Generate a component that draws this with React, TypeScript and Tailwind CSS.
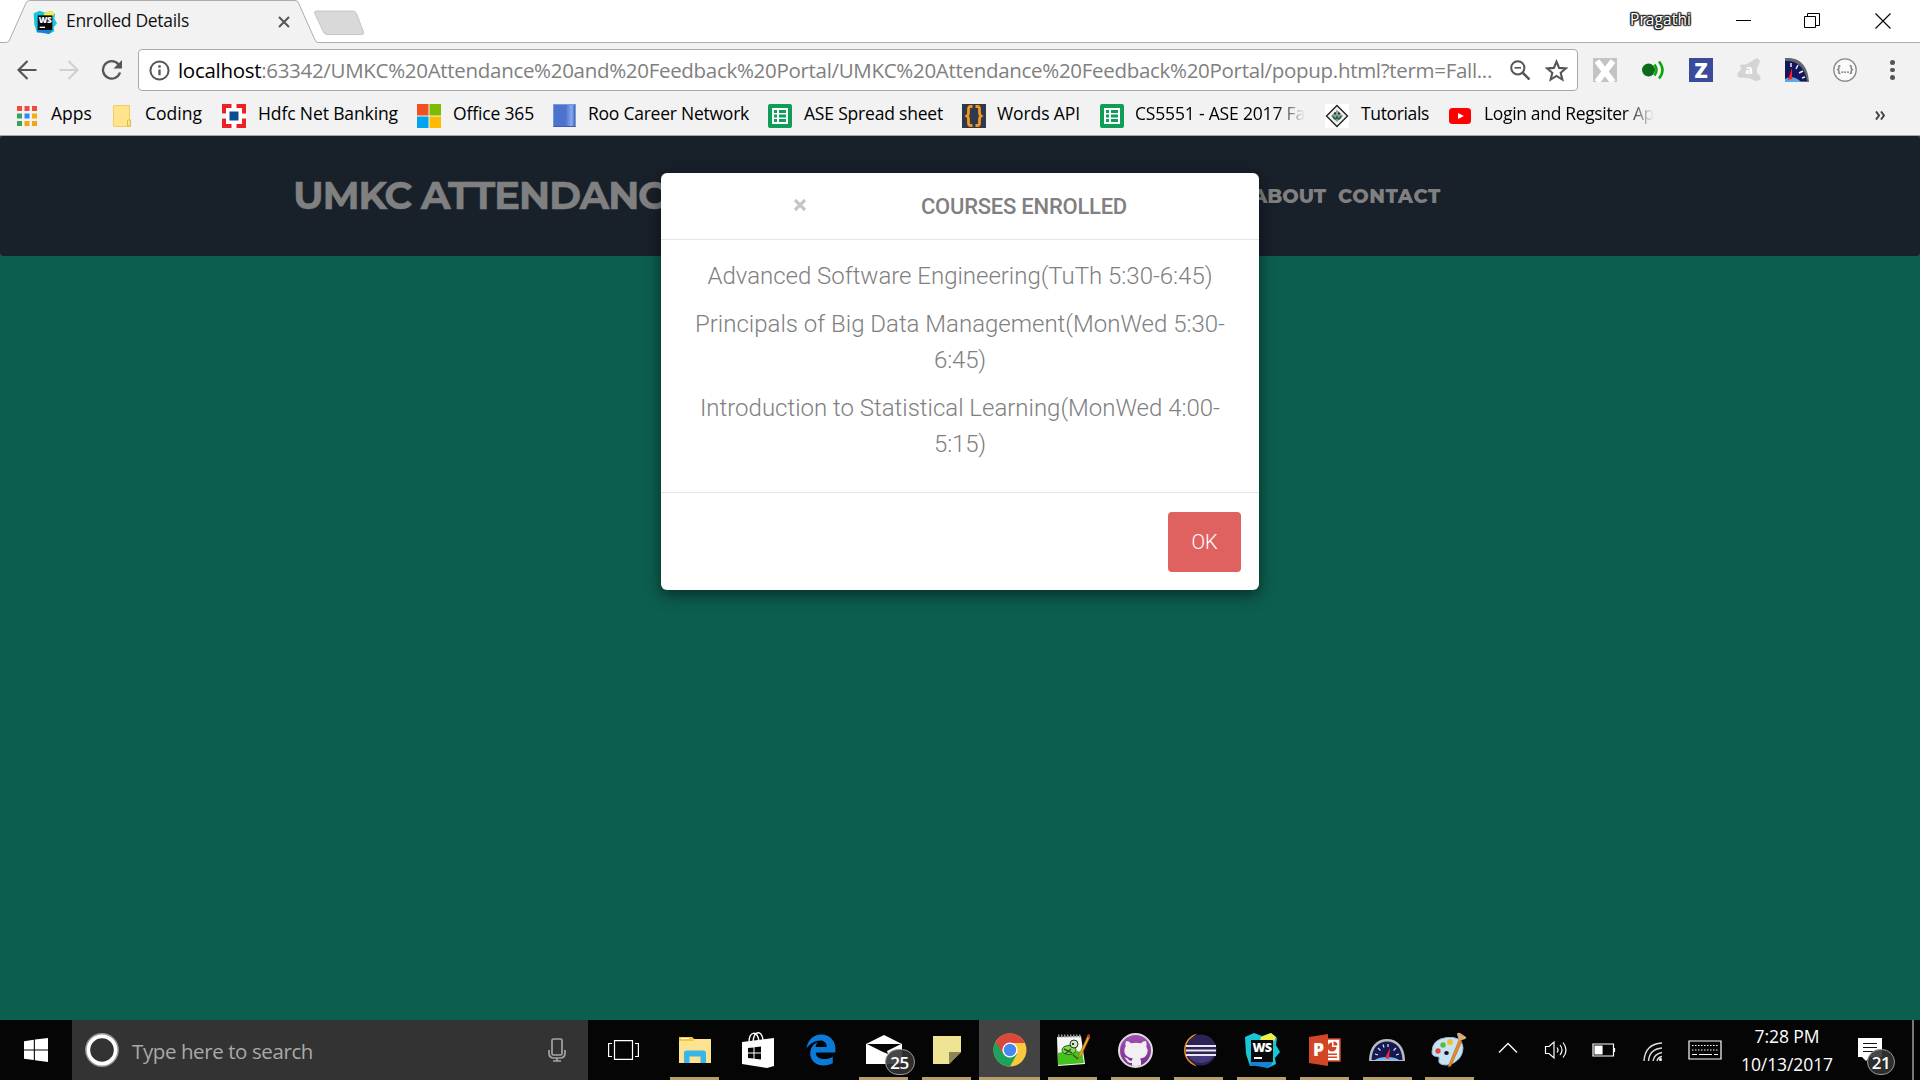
import { useLayoutEffect, useRef, useState, type ReactNode } from "react";
import { FaEdgeLegacy } from "react-icons/fa";

const SEGOE = "font-['Open_Sans','Noto_Sans',sans-serif]";

/** Single line of text whose tracking is tuned so that it spans exactly `width` pixels. */
function Fit({ width, className = "", children }: { width: number; className?: string; children: ReactNode }) {
  const ref = useRef<HTMLSpanElement>(null);
  const [spacing, setSpacing] = useState(0);
  useLayoutEffect(() => {
    const el = ref.current;
    if (!el) return;
    const length = (el.textContent ?? "").length;
    setSpacing((width - el.getBoundingClientRect().width) / length);
  }, [width]);
  return (
    <span ref={ref} className={`inline-block whitespace-pre ${className}`} style={{ letterSpacing: spacing }}>
      {children}
    </span>
  );
}

function WebStormIcon({ className }: { className: string }) {
  return (
    <svg viewBox="0 0 36 36" className={className}>
      <path d="M1 5 10 1l8 3 9-3 6 5-1 7 4 7-5 6 1 6-8 4-10-3-8 1-4-12z" fill="#18c6d8" />
      <path d="m17 5 10-4 5 4-2 4H16z" fill="#f5ee42" />
      <path d="m7 24 8 6 13-2v4l-4 4-12-2-6-1z" fill="#1581d8" />
      <rect x="7" y="8" width="22" height="22" fill="#0a0a0a" />
      <text x="18" y="19.5" textAnchor="middle" fontSize="12.5" fontWeight="800" fill="#fff" fontFamily="Open Sans, sans-serif" letterSpacing="-0.6">WS</text>
      <rect x="10" y="25" width="8" height="2" fill="#fff" />
    </svg>
  );
}

function Sheet() {
  return (
    <svg viewBox="0 0 24 24" className="size-6">
      <rect width="24" height="24" rx="2" fill="#0f9d58" />
      <path d="M4 4h16v16H4z" fill="#fff" />
      <path d="M6 6h3v3H6zm5 0h7v3h-7zM6 10.500h3v3H6zm5 0h7v3h-7zM6 15h3v3H6zm5 0h7v3h-7z" fill="#0f9d58" />
    </svg>
  );
}

function Gauge({ className }: { className: string }) {
  return (
    <svg viewBox="0 0 36 24" className={className}>
      <path d="M0 23C0 8 8 1 18 1s18 7 18 22z" fill="#b9bcc0" />
      <path d="M2.500 22C3 10 9 3.500 18 3.500S33 10 33.500 22z" fill="#15194f" />
      <path d="M6 22c4-4 20-4 24 0z" fill="#74b7ea" />
      <path d="M6 16l3 1M9 10l2.500 2.500M14 6.500l1 3M19 6v3M27 10l-2.500 2.500M30 16l-3 1" stroke="#d9e2ff" strokeWidth="1.200" />
      <path d="m21 10-5 10 4 1z" fill="#f02536" />
    </svg>
  );
}

/* ---------- browser chrome ---------- */

function TabStrip() {
  return (
    <div className="relative flex h-[43px] bg-white">
      <svg className="absolute inset-0" width="1920" height="43" viewBox="0 0 1920 43">
        <path d="M0 42.500h6q2.500 0 3.500-2.500L26 3q1-2.500 3.500-2.500H295q2.500 0 3.500 2.500l16.500 37q1 2.500 3.500 2.500H1920V44H0z" fill="#f2f2f2" stroke="#adadad" />
        <path d="M317 11h36q2.500 0 3.500 2.500L363.500 32q.7 2.500-1.500 2.500h-35q-2.500 0-3.500-2.500L314.500 13q-.5-2 2.500-2z" fill="#d9d9d9" stroke="#c6c6c6" />
      </svg>
      <div className="relative flex w-[320px] items-center">
        <WebStormIcon className="ml-[33px] size-6" />
        <div className="ml-[9px] w-[210px] pb-px text-[17.500px] leading-none text-[#111]">
          <Fit width={123}>Enrolled Details</Fit>
        </div>
        <svg viewBox="0 0 12 12" className="ml-[2px] size-3" stroke="#555" strokeWidth="2">
          <path d="m1 1 10 10M11 1 1 11" />
        </svg>
      </div>
      <div className="relative ml-auto flex items-center pb-[2px]">
        <div className="mr-[45px] pb-px text-[15.500px] leading-none text-white [text-shadow:1px_0_1px_#222,-1px_0_1px_#222,0_1px_1px_#222,0_-1px_1px_#222,1px_1px_1px_#333,-1px_-1px_1px_#333,1px_-1px_1px_#333,-1px_1px_1px_#333]">
          <Fit width={61}>Pragathi</Fit>
        </div>
        <div className="mr-[53px] h-px w-[15px] bg-black" />
        <svg viewBox="0 0 16 16" className="mr-[55px] size-4" fill="none" stroke="#000">
          <path d="M.500 3.500h11v11H.500zM3.500 3V.500h12v12H12" />
        </svg>
        <svg viewBox="0 0 16 16" className="mr-[29px] size-4" stroke="#000" strokeWidth="1.100">
          <path d="m.500.500 15 15m0-15-15 15" />
        </svg>
      </div>
    </div>
  );
}

function Toolbar() {
  return (
    <div className="flex h-[54px] items-center bg-[#f2f2f2]">
      <svg viewBox="0 0 20 20" className="ml-[17px] size-5" fill="none" stroke="#555" strokeWidth="2.200">
        <path d="M19.500 10H2M10.500 1 1.500 10l9 9" />
      </svg>
      <svg viewBox="0 0 20 20" className="ml-[22px] size-5" fill="none" stroke="#d0d0d0" strokeWidth="2.200">
        <path d="M.500 10H18M9.500 1l9 9-9 9" />
      </svg>
      <svg viewBox="0 0 22 20" className="ml-[22px] h-5 w-[22px]" fill="none" stroke="#555" strokeWidth="2.300">
        <path d="M17.500 4.500A8.700 8.700 0 1 0 19 12.500" />
        <path d="M21 0v8.500h-8.500z" fill="#555" stroke="none" />
      </svg>
      <div className="ml-[15px] flex h-[42px] w-[1440px] items-center rounded-[4px] border border-[#a9a9a9] bg-white">
        <svg viewBox="0 0 22 22" className="ml-[10px] size-[21px]" fill="none" stroke="#555" strokeWidth="2.100">
          <circle cx="11" cy="11" r="9.500" />
          <path d="M11 10v6M11 5.500V8" strokeWidth="2.400" />
        </svg>
        <div className="ml-[8px] w-[1330px] pb-px text-[20.500px] leading-7 text-[#808080]">
          <Fit width={1314}>
            <span className="text-black">localhost</span>:63342/UMKC%20Attendance%20and%20Feedback%20Portal/UMKC%20Attendance%20Feedback%20Portal/popup.html?term=Fall...
          </Fit>
        </div>
        <svg viewBox="0 0 20 20" className="ml-[2px] size-5 shrink-0" fill="none" stroke="#555" strokeWidth="2">
          <circle cx="7.800" cy="7.800" r="6.600" />
          <path d="m12.500 12.500 7 7" strokeWidth="2.600" />
          <path d="M4.500 7.800h6.500" strokeWidth="1.600" />
        </svg>
        <svg viewBox="0 0 22 22" className="ml-[15px] size-[23px] shrink-0" fill="none" stroke="#555" strokeWidth="2">
          <path d="m11 2.500 2.500 6 6.500.5-5 4.200 1.600 6.500L11 16.200l-5.600 3.500L7 13.200 2 9l6.500-.5z" />
        </svg>
      </div>
      <div className="ml-[15px] flex gap-6">
        <svg viewBox="0 0 24 24" className="size-6">
          <path fill="#c3c3c3" d="M0 0h24v24H0z" />
          <path stroke="#fff" strokeWidth="6" d="m4 3 16 21M20 3 4 24" />
        </svg>
        <svg viewBox="0 0 24 24" className="size-6" fill="none" stroke="#0ca50c" strokeWidth="2.500">
          <circle cx="7.500" cy="12" r="6.500" fill="#0b6b1b" stroke="none" />
          <path d="M13.500 6.500q4 5.500 0 11M18 3.500q7 8.500 0 17" />
        </svg>
        <svg viewBox="0 0 24 24" className="size-6">
          <path fill="#3c4a9c" d="M0 0h24v24H0z" />
          <text x="12" y="19.500" textAnchor="middle" fontSize="21.500" fontWeight="800" fill="#fff" fontFamily="Open Sans, sans-serif">Z</text>
        </svg>
        <svg viewBox="0 0 24 24" className="size-6">
          <path d="m4 7 5 0 7-4q3-3 5-2t1 4l-3 6 1 5q4 2 3 5-2 3-6 1l-4-2-7-1q-4 1-5-1t2-5l2-3q-3-2-1-3z" fill="#d4d4d4" stroke="#d4d4d4" />
          <text x="12" y="16" textAnchor="middle" fontSize="13" fontWeight="700" fill="#fff" fontFamily="Open Sans, sans-serif">a</text>
        </svg>
        <svg viewBox="0 0 24 24" className="size-6">
          <path d="M0 0h5c11 1 18 9 19 24H0z" fill="#63686c" />
          <path d="M0 3c12-1 20 6 22 20H0z" fill="#15165c" />
          <path d="M0 21c5-3 12-2 16 3H0z" fill="#5ca9e6" />
          <path d="M6 5v4M13 7l-2 4M18 13l-4 2M20 19l-3 1" stroke="#e8eaff" strokeWidth="1.500" />
          <path d="m7 10-4 12 4-1z" fill="#f22" />
        </svg>
        <svg viewBox="0 0 24 24" className="size-6">
          <circle cx="12" cy="12" r="11.200" fill="#fafafa" stroke="#8a8a8a" strokeWidth="1.300" />
          <text x="12" y="15" textAnchor="middle" fontSize="10" fontWeight="700" fill="#777" fontFamily="Open Sans, sans-serif">{"{...}"}</text>
        </svg>
      </div>
      <div className="ml-[33px] flex flex-col gap-[3px]">
        <i className="size-[4.500px] rounded-full bg-[#555]" />
        <i className="size-[4.500px] rounded-full bg-[#555]" />
        <i className="size-[4.500px] rounded-full bg-[#555]" />
      </div>
    </div>
  );
}

function Bookmark({ box, gap, icon, width, fade, label }: { box: string; gap: string; icon: ReactNode; width: number; fade?: boolean; label: string }) {
  return (
    <div className={`flex shrink-0 items-center ${box}`}>
      {icon}
      <div className={`pb-[5px] ${gap}`}>
        <Fit width={width} className={fade ? "bg-linear-to-r from-black from-83% to-transparent bg-clip-text text-transparent" : ""}>{label}</Fit>
      </div>
    </div>
  );
}

function Bookmarks() {
  const appColors = ["fill-[#f04a3e]", "fill-[#f04a3e]", "fill-[#f04a3e]", "fill-[#35a35a]", "fill-[#2a8cf0]", "fill-[#f5ad14]", "fill-[#35a35a]", "fill-[#f5a414]", "fill-[#f5a414]"];
  return (
    <div className="flex h-[39px] items-center border-b border-[#a8a8a8] bg-[#f2f2f2] pb-px pl-[17px] text-[17.500px] leading-6 text-black">
      <Bookmark box="w-[96px]" gap="ml-[14px]" width={41} label="Apps" icon={
        <svg viewBox="0 0 20 20" className="size-5">
          {appColors.map((c, i) => <rect key={i} x={(i % 3) * 7.500} y={Math.floor(i / 3) * 7.500} width="5" height="5" className={c} />)}
        </svg>
      } />
      <Bookmark box="w-[109px]" gap="ml-[14px]" width={57} label="Coding" icon={
        <svg viewBox="0 0 18 22" className="h-[22px] w-[18px]">
          <path d="M.500.500h16v15l1 1v5H.500z" fill="#ffe48d" stroke="#f0ce63" />
          <path d="M14.500 20v-5h3v6h-3z" fill="#ffe48d" stroke="#e3b94c" />
        </svg>
      } />
      <Bookmark box="w-[195px]" gap="ml-[12px]" width={140} label="Hdfc Net Banking" icon={
        <svg viewBox="0 0 24 24" className="size-6">
          <path fill="#ed2028" d="M0 0h24v24H0z" />
          <path fill="#fff" d="M4 4h16v16H4zM9.500 0h5v24h-5zM0 9.500h24v5H0z" />
          <path fill="#0b4c93" d="M7.500 7.500h9v9h-9z" />
        </svg>
      } />
      <Bookmark box="w-[136px]" gap="ml-[12px]" width={81} label="Office 365" icon={
        <svg viewBox="0 0 24 24" className="size-6">
          <path fill="#f25022" d="M0 0h11.500v11.500H0z" /><path fill="#7fba00" d="M12.500 0H24v11.500H12.500z" />
          <path fill="#00a4ef" d="M0 12.500h11.500V24H0z" /><path fill="#ffb900" d="M12.500 12.500H24V24H12.500z" />
        </svg>
      } />
      <Bookmark box="w-[215px]" gap="ml-[12px]" width={161} label="Roo Career Network" icon={
        <div className="h-[23px] w-[23px] border border-[#7a9ae0] border-b-[#3b5dab] bg-linear-to-r from-[#4d73cf] from-55% via-[#8ca9e8] via-85% to-[#3d63bb]" />
      } />
      <Bookmark box="w-[194px]" gap="ml-[12px]" width={139} label="ASE Spread sheet" icon={<Sheet />} />
      <Bookmark box="w-[138px]" gap="ml-[11px]" width={83} label="Words API" icon={
        <svg viewBox="0 0 24 24" className="size-6">
          <path fill="#2c3a4a" d="M0 0h24v24H0z" />
          <path d="M10.500 2.500H8.500q-2 0-2 2.500v4q0 2-1.500 3 1.500 1 1.500 3v4q0 2.500 2 2.500h2M13.500 2.500h2q2 0 2 2.500v4q0 2 1.500 3-1.500 1-1.500 3v4q0 2.500-2 2.500h-2" fill="none" stroke="#f7941e" strokeWidth="2.800" />
        </svg>
      } />
      <Bookmark box="w-[225px]" gap="ml-[11px]" width={170} fade label="CS5551 - ASE 2017 Fa" icon={<Sheet />} />
      <Bookmark box="w-[124px]" gap="ml-[12px]" width={68} label="Tutorials" icon={
        <svg viewBox="0 0 24 24" className="size-6">
          <path fill="#fff" d="M0 0h24v24H0z" />
          <path d="M12 1.500 22.500 12 12 22.500 1.500 12z" fill="#f2f2f2" stroke="#222" strokeWidth="1.400" />
          <path d="M12 6.500 17.500 12 12 17.500 6.500 12z" fill="#8fa898" stroke="#777" strokeDasharray="2 1" />
          <path d="M8 12q2 5 4 1 2 4 4-1" fill="none" stroke="#23684a" strokeWidth="1.800" />
          <path d="M9 8.500h2v2H9zm4 0h2v2h-2z" fill="#333" />
        </svg>
      } />
      <Bookmark box="w-[220px]" gap="ml-[13px]" width={170} fade label="Login and Regsiter Ap" icon={
        <svg viewBox="0 0 22 16" className="h-4 w-[22px]"><rect width="22" height="16" rx="3.500" fill="#f00" /><path d="m9 5 6 3-6 3z" fill="#fff" /></svg>
      } />
      <svg viewBox="0 0 10 9" className="ml-auto mr-[35px] h-[9px] w-[10px]" fill="none" stroke="#444" strokeWidth="2">
        <path d="m1 .5 3 4-3 4M6 .5l3 4-3 4" />
      </svg>
    </div>
  );
}

/* ---------- page ---------- */

function Modal() {
  return (
    <div className="absolute left-[661px] top-[37px] flex h-[417px] w-[598px] flex-col rounded-[6px] bg-white font-['Roboto',sans-serif] text-[#808080] shadow-[0_5px_15px_rgba(0,0,0,0.5)]">
      <div className="flex h-[67px] shrink-0 items-center border-b border-[#e3e6e6]">
        <svg viewBox="0 0 12 12" className="ml-[133px] mt-[-3px] size-3" stroke="#c6c6c6" strokeWidth="3.200">
          <path d="m1 1 10 10M11 1 1 11" />
        </svg>
        <h4 className="ml-[115px] pt-[2px] text-[22px] font-medium leading-none"><Fit width={206}>COURSES ENROLLED</Fit></h4>
      </div>
      <div className="flex h-[252px] shrink-0 flex-col gap-3 pt-[18px] text-center text-[24px] font-light leading-[36px]">
        <p><Fit width={505}>Advanced Software Engineering(TuTh 5:30-6:45)</Fit></p>
        <p><Fit width={530}>Principals of Big Data Management(MonWed 5:30-</Fit><br /><Fit width={52}>6:45)</Fit></p>
        <p><Fit width={520}>Introduction to Statistical Learning(MonWed 4:00-</Fit><br /><Fit width={52}>5:15)</Fit></p>
      </div>
      <div className="flex grow justify-end border-t border-[#e3e6e6] pr-[18px] pt-[19px]">
        <button className="h-[60px] w-[73px] rounded-[4px] bg-[#df6260] text-[20px] font-light text-white"><Fit width={26}>OK</Fit></button>
      </div>
    </div>
  );
}

function Page() {
  return (
    <div className="relative h-[884px] bg-[#0c5e4e]">
      <nav className="flex h-[120px] items-center rounded-[4px] bg-[#18202a] font-['Montserrat','Inter',sans-serif] text-[#808080]">
        <div className="ml-[293px] w-[1046px] pb-[2px] text-[39px] font-bold leading-none [-webkit-text-stroke:0.4px_#808080]"><Fit width={372}>UMKC ATTENDANC</Fit></div>
        <div className="-ml-[87px] w-[86px] pt-px text-[19.500px] font-extrabold leading-none"><Fit width={74}>ABOUT</Fit></div>
        <div className="pt-px text-[19.500px] font-extrabold leading-none"><Fit width={103}>CONTACT</Fit></div>
      </nav>
      <Modal />
    </div>
  );
}

/* ---------- taskbar ---------- */

function Cell({ wide, active, open, children }: { wide?: boolean; active?: boolean; open?: boolean; children: ReactNode }) {
  return (
    <div className={`flex h-[60px] shrink-0 flex-col items-center ${wide ? "w-[63px]" : "w-[62px]"}`}>
      <div className={`flex h-[57px] items-center justify-center pt-[3px] ${active ? "w-[61px] bg-[#444343]" : "w-[49px]"}`}>{children}</div>
      {active && <div className="h-[3px] w-[61px] bg-[#b69f6b]" />}
      {open && <div className="h-[3px] w-[49px] bg-[#b69f6b]" />}
    </div>
  );
}

function Badge({ className, children }: { className: string; children: ReactNode }) {
  return (
    <span className={`absolute flex items-center justify-center rounded-full border border-[#999] bg-[#333]/90 text-[17px] font-semibold leading-none tracking-[-0.5px] text-white ${className}`}>
      {children}
    </span>
  );
}

function Taskbar() {
  return (
    <div className="flex h-[60px] bg-[#050505] text-white">
      <div className="flex w-[72px] items-center pl-6">
        <svg viewBox="0 0 24 24" className="size-6" fill="#fff"><path d="M0 3.200 9.800 1.800v9.600H0zM10.900 1.600 24 0v11.400H10.900zM0 12.500h9.800v9.600L0 20.800zM10.900 12.500H24V24l-13.100-1.700z" /></svg>
      </div>
      <div className="flex w-[516px] items-center bg-[#333]">
        <svg viewBox="0 0 34 34" className="ml-[13px] size-[34px]" fill="none">
          <circle cx="17" cy="17" r="15.700" stroke="#999" strokeWidth="2.400" />
          <circle cx="17" cy="17" r="13.600" stroke="#fff" strokeWidth="3.600" />
        </svg>
        <div className="ml-[13px] w-[416px] pt-[3px] text-[20.500px] leading-none text-[#a9a9a9]"><Fit width={181}>Type here to search</Fit></div>
        <svg viewBox="0 0 18 24" className="h-6 w-[18px]" fill="none" stroke="#a5a5a5" strokeWidth="1.700">
          <rect x="4" y="1" width="10" height="16" rx="1.500" />
          <path d="M1 12v3q0 5 5 5h6q5 0 5-5v-3M9 20v3M5 23h8" />
        </svg>
      </div>
      <div className="flex w-[75px] items-center pl-[20px]">
        <svg viewBox="0 0 31 20" className="h-5 w-[31px]" fill="none" stroke="#fff" strokeWidth="1.200">
          <path d="M6.500.6h18v18.800h-18zM4 3.500H.6v13H4M27 3.500h3.400v13H27" />
        </svg>
      </div>
      <Cell wide open>
        <svg viewBox="0 0 32 28" className="h-7 w-8">
          <path d="M0 1h13l2 2h17v24H0z" fill="#fde38f" /><path d="M0 1h13l2 4H0z" fill="#f8c735" /><path d="M2 2.500h8" stroke="#fff" />
          <path d="M5 27V17q0-2.500 2.500-2.500h17q2.500 0 2.500 2.500v10h-5.500v-6.500h-11V27z" fill="#38b6e8" />
        </svg>
      </Cell>
      <Cell wide>
        <svg viewBox="0 0 32 36" className="h-9 w-8">
          <path d="M7 11C7-1 15-2 17 9M11 10C12-2 20-2 21 8" fill="none" stroke="#fff" strokeWidth="1.400" />
          <path d="m0 10 32-4v28l-7 2-25-4z" fill="#fff" />
          <path d="m6 16 5.500-.6v5H6zm6.500-.8 6.500-.8v6h-6.500zM6 21.500h5.500v5L6 26zm6.500 0H19v6l-6.500-.8z" fill="#050505" />
        </svg>
      </Cell>
      <Cell wide><FaEdgeLegacy className="size-8 text-[#0a7bd8]" /></Cell>
      <Cell wide open>
        <div className="relative h-[30px] w-9 shrink-0">
          <svg viewBox="0 0 36 30" className="h-[30px] w-9"><path d="M0 9 18 0l18 9v20H0z" fill="#fff" /><path d="m1 9 34 0-14 7 1 3-5-2z" fill="#050505" /></svg>
          <Badge className="left-[19px] top-[14px] h-[26px] w-[30px]">25</Badge>
        </div>
      </Cell>
      <Cell wide open>
        <svg viewBox="0 0 28 28" className="size-7"><path d="M0 0h28v16L16 28H0z" fill="#eee493" /><path d="M28 16H16v12z" fill="#8e8554" /></svg>
      </Cell>
      <Cell wide active>
        <svg viewBox="0 0 34 34" className="size-[34px]">
          <circle cx="17" cy="17" r="16.500" fill="#fbc93c" />
          <path d="M17 17 2.700 8.700A16.500 16.500 0 0 0 17 33.500L24 21z" fill="#1da15f" />
          <path d="M2.700 8.700A16.500 16.500 0 0 1 32 10H17l-7 11z" fill="#da483c" />
          <circle cx="17" cy="17" r="7.600" fill="#fff" /><circle cx="17" cy="17" r="6.200" fill="#4788f0" />
        </svg>
      </Cell>
      <Cell wide open>
        <svg viewBox="0 0 34 34" className="size-[34px]">
          <path d="M1 4 25 3l4 28-27 2z" fill="#f4f7f4" /><path d="M2 20q12-4 24-1l2 11-26 2z" fill="#46c21e" />
          <path d="M2 3h24" stroke="#999" strokeWidth="3" strokeDasharray="1.500 1.500" />
          <ellipse cx="13" cy="17" rx="7" ry="4.500" fill="#85d94b" stroke="#275e1b" /><circle cx="18" cy="11" r="4" fill="#cdebb8" stroke="#333" /><circle cx="17" cy="11" r="1" />
          <path d="m8 16 8 4m-7 1 6-5M17 22l5 4" stroke="#275e1b" strokeWidth="1.500" />
          <path d="m32 2-9 20-1 3 3-2L34 4z" fill="#f3aa1c" stroke="#8d5a16" strokeWidth=".6" /><path d="m32 1 2 1-1 3-2-1z" fill="#c53939" />
        </svg>
      </Cell>
      <Cell wide open>
        <div className="flex size-[35px] shrink-0 items-center justify-center overflow-hidden rounded-full border-2 border-[#ddd] bg-linear-to-b from-[#a54fb5] to-[#743091]">
          <svg viewBox="0 0 32 32" className="size-8 shrink-0" fill="#f1eff2">
            <path d="M6 7q3 0 5 2.300 5-1.200 10 0Q23 7 26 7q1 3 .3 5.500 2 3 1 6.500-1.500 5-7.300 5.500 1 1.500 1 3V32H12v-3q-4 .5-5.500-3-1-2-2.500-2.500 3-.5 4.500 2 1.500 2 3.500 1 0-1.500.8-2.200Q6 23.500 4.700 19q-1-4 1-6.500Q5 9.500 6 7z" />
          </svg>
        </div>
      </Cell>
      <Cell wide open>
        <svg viewBox="0 0 36 34" className="h-[34px] w-9">
          <path d="M16 .5A17 17 0 0 0 16 33.500 20 20 0 0 1 16 .5z" fill="#f7941e" />
          <circle cx="20" cy="17" r="15.500" fill="#2c2255" /><path d="M7 22h26q-4 8-13 8T7 22z" fill="#423b7c" />
          <path d="M5 13h30M5 17.500h30M5 22h30" stroke="#e9e7f5" strokeWidth="2" />
        </svg>
      </Cell>
      <Cell wide open><WebStormIcon className="size-9 shrink-0" /></Cell>
      <Cell wide open>
        <svg viewBox="0 0 32 32" className="size-8">
          <path d="M17 5h14v22H17z" fill="#fff" stroke="#d24625" strokeWidth="1.500" />
          <path d="M23 8.500a4.500 4.500 0 1 0 4.500 4.500H23zM24.500 7.500v4H28.500a4 4 0 0 0-4-4zM19 19.500h9v1.500h-9zm0 3h9V24h-9z" fill="#d24625" />
          <path d="m0 3 19-3v32L0 29z" fill="#d24625" />
          <text x="9.500" y="22" textAnchor="middle" fontSize="17.500" fontWeight="800" fill="#fff" fontFamily="Open Sans, sans-serif">P</text>
        </svg>
      </Cell>
      <Cell open><Gauge className="h-6 w-9 shrink-0" /></Cell>
      <Cell open>
        <svg viewBox="0 0 36 36" className="size-9 shrink-0">
          <path d="M1 20Q1 7 16 5.500t16 10q0 8-6 13-7 6-15 4-4-1-3-5 1-3-2-3-5 0-5-4.500z" fill="#c7e2f3" stroke="#92b8cf" />
          <circle cx="7" cy="19" r="2.700" fill="#e04b3e" /><circle cx="12" cy="13" r="2.700" fill="#58ba41" /><circle cx="19" cy="10" r="2.900" fill="#f2bf2b" />
          <ellipse cx="15.500" cy="21" rx="2.300" ry="2" fill="#111" />
          <path d="M28 8 17 35l3-1L31 9z" fill="#e98a28" stroke="#a65712" strokeWidth=".5" /><path d="M26 2q1-2 3-1l6 4q1 1-1 2l-6 2z" fill="#d5ae7c" />
        </svg>
      </Cell>
      <div className="flex w-[262px] items-center">
        <svg viewBox="0 0 20 12" className="ml-[18px] h-3 w-5 -mt-1" fill="none" stroke="#fff" strokeWidth="1.300"><path d="m1 10.500 9-9 9 9" /></svg>
        <svg viewBox="0 0 24 20" className="ml-[26px] h-5 w-6" fill="none" stroke="#fff" strokeWidth="1.200">
          <path d="M1.500 6.500H5L10 2v16l-5-4.500H1.500z" /><path d="M13 7.500q2 2.500 0 5M16 5q4 5 0 10M19 2.500q6 7.500 0 15" />
        </svg>
        <svg viewBox="0 0 24 14" className="ml-[24px] h-3.5 w-6" fill="none" stroke="#fff" strokeWidth="1.200">
          <path d="M1 1h20.500v12H1zM22.500 5v4" /><path d="M3 3h7v8H3z" fill="#fff" />
        </svg>
        <svg viewBox="0 0 20 20" className="ml-[27px] mt-1 size-5" fill="none" stroke="#ddd" strokeWidth="1.400">
          <path d="M1 19Q2 2 19 1M5.500 19Q6.500 7 19 6M10 19q1-7 9-8.500M14 19q1-4 5-4.500" /><circle cx="17.500" cy="17.500" r="1.500" fill="#fff" stroke="none" />
        </svg>
        <svg viewBox="0 0 34 20" className="ml-[25px] h-5 w-[34px]" fill="none" stroke="#fff" strokeWidth="1.200">
          <path d="M1 1h32v18H1z" /><path d="M4 5.500h26M4 10h26" strokeDasharray="1.500 1.500" /><path d="M4 14.500h5M11 14.500h13M26 14.500h4" />
        </svg>
      </div>
      <div className="-ml-px flex w-[92px] flex-col items-center pt-[3px] text-[17.500px] leading-[27.500px]">
        <Fit width={65}>7:28 PM</Fit>
        <Fit width={92}>10/13/2017</Fit>
      </div>
      <div className="relative ml-[25px] mt-[18px] h-[26px] w-[54px]">
        <svg viewBox="0 0 24 24" className="size-6"><path d="M0 0h24v19H12l-4 4-4-4H0z" fill="#fff" /><path d="M5 5.500h14M5 9.500h14M5 13.500h10" stroke="#111" strokeWidth="1.200" /></svg>
        <Badge className="left-[9px] top-[11px] h-[26px] w-[28px]">21</Badge>
      </div>
      <div className="h-[60px] w-[2px] bg-[#777]" />
    </div>
  );
}

export default function App() {
  return (
    <div className={`h-[1080px] w-[1920px] overflow-hidden ${SEGOE}`}>
      <TabStrip />
      <Toolbar />
      <Bookmarks />
      <Page />
      <Taskbar />
    </div>
  );
}
